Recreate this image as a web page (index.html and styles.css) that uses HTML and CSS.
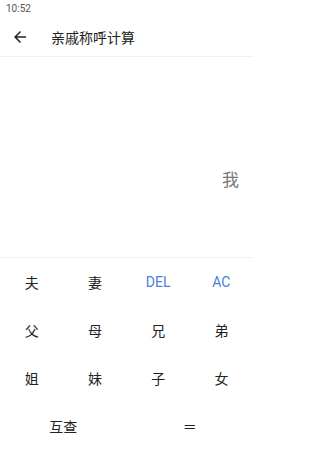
FILE: index.html
```html
<!DOCTYPE html>
<html lang="zh">
<head>
<meta charset="utf-8">
<title>亲戚称呼计算</title>
<link rel="stylesheet" href="styles.css">
</head>
<body>
<div class="app">
  <div class="status">10:52</div>
  <div class="toolbar">
    <svg class="back" width="18" height="18" viewBox="0 0 24 24"><path d="M20 11H7.83l5.59-5.59L12 4l-8 8 8 8 1.41-1.41L7.83 13H20v-2z" fill="#222"/></svg>
    <div class="title">亲戚称呼计算</div>
  </div>
  <div class="display">
    <div class="input">我</div>
  </div>
  <div class="keypad">
    <div class="row">
      <div class="key">夫</div>
      <div class="key">妻</div>
      <div class="key blue">DEL</div>
      <div class="key blue">AC</div>
    </div>
    <div class="row">
      <div class="key">父</div>
      <div class="key">母</div>
      <div class="key">兄</div>
      <div class="key">弟</div>
    </div>
    <div class="row">
      <div class="key">姐</div>
      <div class="key">妹</div>
      <div class="key">子</div>
      <div class="key">女</div>
    </div>
    <div class="row">
      <div class="key">互查</div>
      <div class="key">＝</div>
    </div>
  </div>
</div>
</body>
</html>
```
FILE: styles.css
```css
html, body {
  margin: 0;
  padding: 0;
  background: #ffffff;
}
body {
  font-family: Roboto, "Noto Sans CJK SC", sans-serif;
  color: #222;
}
.app {
  width: 253px;
  height: 450px;
  display: flex;
  flex-direction: column;
}
.status {
  height: 17px;
  box-sizing: border-box;
  padding: 3px 0 0 6px;
  font-size: 10px;
  line-height: 12px;
  color: #555;
}
.toolbar {
  height: 40px;
  box-sizing: border-box;
  display: flex;
  align-items: center;
  border-bottom: 1px solid #f0f0f0;
}
.back {
  margin-left: 11px;
  margin-right: 22px;
}
.title {
  font-size: 14px;
  color: #222;
}
.display {
  flex: 1;
  display: flex;
  flex-direction: column;
  justify-content: flex-end;
  align-items: flex-end;
  padding: 0 14px 64px 0;
  border-bottom: 1px solid #f0f0f0;
}
.input {
  font-size: 17px;
  line-height: 26px;
  color: #777;
}
.keypad {
  height: 192px;
  display: flex;
  flex-direction: column;
}
.row {
  flex: 1;
  display: flex;
}
.key {
  flex: 1;
  display: flex;
  align-items: center;
  justify-content: center;
  font-size: 14px;
  color: #222;
}
.key.blue {
  color: #4a80d8;
}
```
